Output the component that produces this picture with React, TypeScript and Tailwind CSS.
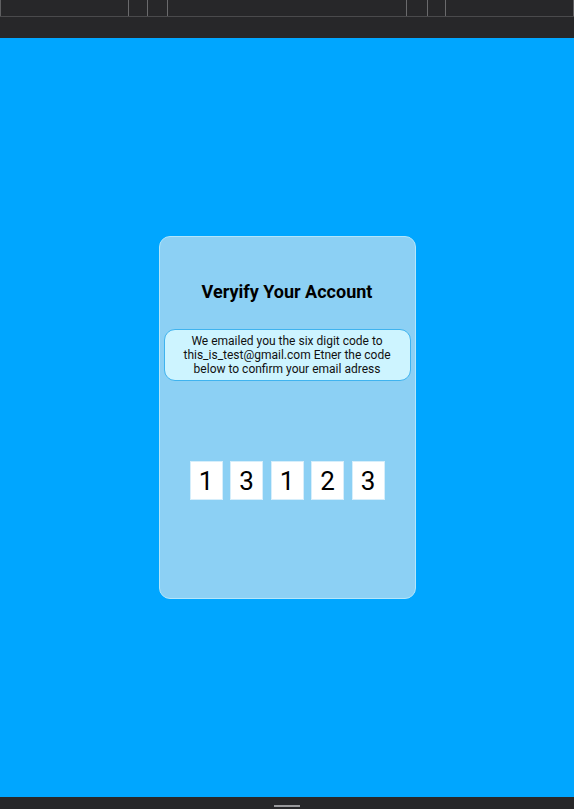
import React from 'react';

const tabLines = [128, 147, 167, 406, 427, 445];

export default function App() {
  const code = ['1', '3', '1', '2', '3'];

  return (
    <div className="flex h-[809px] w-[574px] flex-col bg-[#272729]" style={{ fontFamily: 'Roboto, "Liberation Sans", sans-serif' }}>
      {/* Top chrome */}
      <div className="h-[38px] shrink-0">
        <div className="relative h-[17px] border-b border-[#4a4a4c]">
          <div className="absolute left-0 top-0 h-[16px] w-px bg-[#5f5f61]" />
          {tabLines.map((x) => (
            <div key={x} className="absolute top-0 h-[16px] w-px bg-[#6a6a6c]" style={{ left: x }} />
          ))}
          <div className="absolute right-0 top-0 h-[16px] w-px bg-[#5f5f61]" />
        </div>
      </div>

      {/* Main area */}
      <div className="flex flex-1 items-center justify-center bg-[#00a6ff]">
        <div className="flex h-[363px] w-[257px] flex-col items-center rounded-[11px] border border-[#b3e6fb] bg-[#8cd0f4] px-[4px]">
          <h1 className="mt-[41px] text-[18px] font-bold leading-[28px] text-black">Veryify Your Account</h1>
          <div className="mt-[23px] w-full rounded-[11px] border border-[#3fb3ef] bg-[#cdf4ff] px-2 py-[4px] text-center text-[12px] leading-[14px] text-[#111]">
            We emailed you the six digit code to this_is_test@gmail.com Etner the code below to confirm your email adress
          </div>
          <div className="mt-[80px] flex gap-[7.5px]">
            {code.map((d, i) => (
              <div
                key={i}
                className="flex h-[39px] w-[33px] items-center justify-center border border-[#d6eefb] bg-white text-[26px] leading-none text-black"
              >
                {d}
              </div>
            ))}
          </div>
        </div>
      </div>

      {/* Bottom bar */}
      <div className="flex h-[12px] shrink-0 items-start justify-center">
        <div className="mt-[8px] h-[2px] w-[26px] bg-[#9a9a9c]" />
      </div>
    </div>
  );
}
